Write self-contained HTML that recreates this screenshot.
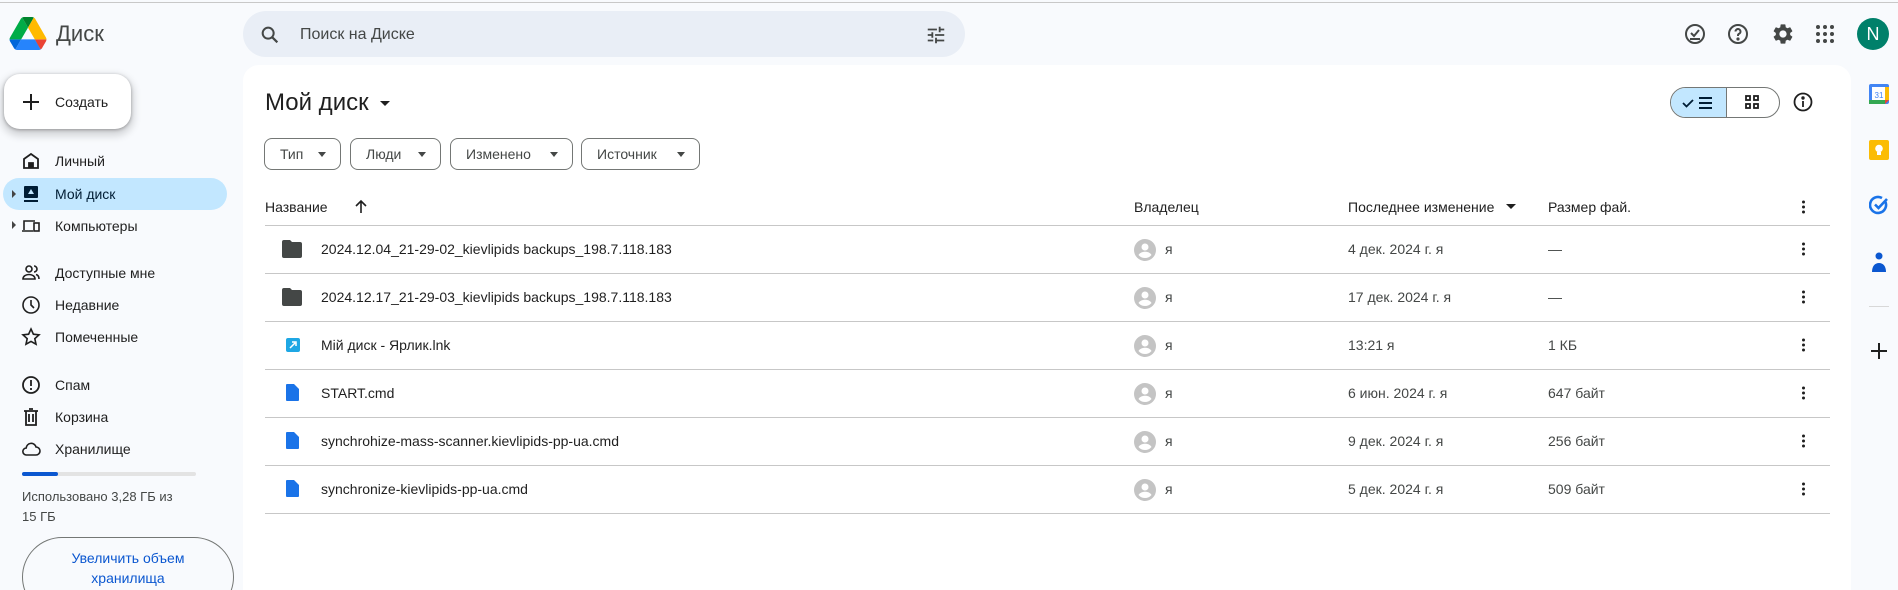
<!DOCTYPE html>
<html><head><meta charset="utf-8"><style>
*{box-sizing:border-box;margin:0;padding:0}
html{width:1898px;height:590px;overflow:hidden}
body{width:1898px;height:590px;overflow:hidden;background:#f8fafd;font-family:"Liberation Sans",Arial,sans-serif;color:#1f1f1f;position:relative}
.a{position:absolute}
.t{font-size:14px;white-space:nowrap}
.nav{position:absolute;left:55px;font-size:14px;color:#1f1f1f;transform:translateY(-50%)}
.ni{position:absolute;left:21px;width:20px;height:20px;transform:translateY(-50%)}
.chip{position:absolute;top:138px;height:32px;border:1px solid #747775;border-radius:8px;font-size:14px;color:#444746;padding-left:15px;line-height:30px}
.chip:after{content:"";position:absolute;right:14px;top:13px;border-left:4px solid transparent;border-right:4px solid transparent;border-top:5px solid #444746}
.line{position:absolute;left:265px;width:1565px;height:1px;background:#c7c7c7}
.cell{position:absolute;font-size:14px;transform:translateY(-50%);white-space:nowrap;color:#1f1f1f}
.keb{position:absolute;left:1802px;width:4px;transform:translateY(-50%)}
.keb i{display:block;width:3px;height:3px;border-radius:2px;background:#1f1f1f;margin:2px 0}
</style></head><body>
<div class="a" style="left:0;top:2px;width:1898px;height:1px;background:#c8c8c8"></div>
<svg class="a" style="left:9px;top:17px" width="38" height="33" viewBox="0 0 87.3 78">
<path d="m6.6 66.85 3.850 6.65c.8 1.4 1.95 2.5 3.3 3.3l13.75-23.8h-27.5c0 1.55.4 3.1 1.2 4.5z" fill="#0066da"/>
<path d="m43.65 25-13.75-23.8c-1.35.8-2.5 1.9-3.3 3.3l-25.4 44a9.06 9.06 0 0 0 -1.2 4.5h27.5z" fill="#00ac47"/>
<path d="m73.55 76.8c1.35-.8 2.5-1.9 3.3-3.3l1.6-2.75 7.65-13.25c.8-1.4 1.2-2.950 1.2-4.5h-27.502l5.852 11.5z" fill="#ea4335"/>
<path d="m43.65 25 13.75-23.8c-1.35-.8-2.9-1.2-4.5-1.2h-18.5c-1.6 0-3.15.45-4.5 1.2z" fill="#00832d"/>
<path d="m59.8 53h-32.3l-13.75 23.8c1.35.8 2.9 1.2 4.5 1.2h50.8c1.6 0 3.15-.45 4.5-1.2z" fill="#2684fc"/>
<path d="m73.4 26.5-12.7-22c-.8-1.4-1.95-2.5-3.3-3.3l-13.75 23.8 16.15 28h27.45c0-1.55-.4-3.1-1.2-4.5z" fill="#ffba00"/>
</svg>
<div class="a" style="left:56px;top:21px;font-size:22px;color:#444746">Диск</div>
<div class="a" style="left:243px;top:11px;width:722px;height:46px;border-radius:23px;background:#e9eef6"></div>
<svg class="a" style="left:259px;top:24px" width="22" height="22" viewBox="0 0 24 24"><circle cx="10" cy="10" r="6" fill="none" stroke="#444746" stroke-width="2.2"/><path d="M14.5 14.5 20 20" stroke="#444746" stroke-width="2.4"/></svg>
<div class="a" style="left:300px;top:26px;font-size:16px;color:#444746">Поиск на Диске</div>
<svg class="a" style="left:925px;top:24px" width="22" height="22" viewBox="0 0 24 24" fill="#444746"><path d="M3 17v2h6v-2H3zM3 5v2h10V5H3zm10 16v-2h8v-2h-8v-2h-2v6h2zM7 9v2H3v2h4v2h2V9H7zm14 4v-2H11v2h10zm-6-4h2V7h4V5h-4V3h-2v6z"/></svg>
<svg class="a" style="left:1683px;top:22px" width="24" height="24" viewBox="0 0 24 24" fill="none" stroke="#444746" stroke-width="2"><circle cx="12" cy="12" r="9"/><path d="M8 11l3 3 5-6M7 17h10"/></svg>
<svg class="a" style="left:1726px;top:22px" width="24" height="24" viewBox="0 0 24 24" fill="none" stroke="#444746" stroke-width="2"><circle cx="12" cy="12" r="9"/><path d="M9.5 9.5a2.5 2.5 0 1 1 3.5 2.3c-.7.4-1 1-1 1.7v.5"/><circle cx="12" cy="17" r=".6" fill="#444746"/></svg>
<svg class="a" style="left:1771px;top:22px" width="24" height="24" viewBox="0 0 24 24" fill="#444746"><path d="M19.14 12.94c.04-.3.06-.61.06-.94s-.02-.64-.07-.94l2.03-1.58a.49.49 0 0 0 .12-.61l-1.92-3.32a.49.49 0 0 0-.59-.22l-2.39.96c-.5-.38-1.03-.7-1.62-.94l-.36-2.54a.48.48 0 0 0-.48-.41h-3.840c-.24 0-.43.17-.47.41l-.36 2.54c-.59.24-1.13.57-1.62.94l-2.39-.96a.48.48 0 0 0-.59.22L2.74 8.87c-.12.21-.08.47.12.61l2.03 1.58c-.05.3-.09.63-.09.94s.02.64.07.94l-2.03 1.58a.49.49 0 0 0-.12.61l1.92 3.32c.12.22.37.29.59.22l2.39-.96c.5.38 1.03.7 1.62.94l.36 2.54c.05.24.24.41.48.41h3.84c.24 0 .44-.17.47-.41l.36-2.54c.59-.24 1.13-.56 1.62-.94l2.39.96c.22.08.47 0 .59-.22l1.92-3.32c.12-.22.07-.47-.12-.61l-2.01-1.58zM12 15.6c-1.98 0-3.6-1.62-3.6-3.6s1.62-3.6 3.6-3.6 3.6 1.62 3.6 3.6-1.62 3.6-3.6 3.6z"/></svg>
<svg class="a" style="left:1815px;top:24px" width="20" height="20" viewBox="0 0 20 20" fill="#444746"><circle cx="3" cy="3" r="2"/><circle cx="10" cy="3" r="2"/><circle cx="17" cy="3" r="2"/><circle cx="3" cy="10" r="2"/><circle cx="10" cy="10" r="2"/><circle cx="17" cy="10" r="2"/><circle cx="3" cy="17" r="2"/><circle cx="10" cy="17" r="2"/><circle cx="17" cy="17" r="2"/></svg>
<div class="a" style="left:1857px;top:18px;width:32px;height:32px;border-radius:16px;background:#00806a;color:#fff;font-size:18px;text-align:center;line-height:32px">N</div>
<div class="a" style="left:4px;top:74px;width:127px;height:55px;border-radius:16px;background:#fff;box-shadow:0 1px 3px rgba(0,0,0,.3),0 4px 8px 3px rgba(0,0,0,.15)"></div>
<svg class="a" style="left:21px;top:92px" width="20" height="20" viewBox="0 0 20 20"><path d="M10 2v16M2 10h16" stroke="#1f1f1f" stroke-width="2"/></svg>
<div class="a t" style="left:55px;top:94px;font-weight:500">Создать</div>
<div class="a" style="left:3px;top:178px;width:224px;height:32px;border-radius:16px;background:#c2e7ff"></div>
<div class="a" style="left:12px;top:190px;border-top:4px solid transparent;border-bottom:4px solid transparent;border-left:4px solid #444"></div>
<div class="a" style="left:12px;top:221px;border-top:4px solid transparent;border-bottom:4px solid transparent;border-left:4px solid #444"></div>
<svg class="ni" style="top:161px" viewBox="0 0 20 20" fill="none" stroke="#1f1f1f" stroke-width="1.8"><path d="M3 17V8l7-5 7 5v9H3z"/><path d="M8 17v-5h4v5" fill="#1f1f1f"/></svg>
<svg class="ni" style="top:194px" viewBox="0 0 20 20"><rect x="3" y="2" width="14" height="12" rx="1" fill="#001d35"/><rect x="3" y="16" width="14" height="2" fill="#001d35"/><path d="M10 5l3 5H7z" fill="#c2e7ff"/></svg>
<svg class="ni" style="top:226px" viewBox="0 0 20 20" fill="none" stroke="#1f1f1f" stroke-width="1.6"><path d="M3 14V5h11M1 15h11"/><rect x="13" y="7" width="5" height="8"/></svg>
<svg class="ni" style="top:273px" viewBox="0 0 20 20" fill="none" stroke="#1f1f1f" stroke-width="1.6"><circle cx="8" cy="6" r="3"/><path d="M2 16c0-3 3-4.5 6-4.5s6 1.5 6 4.5zM13 3a3 3 0 0 1 0 6M15 11.5c2 .5 3 2 3 4.5"/></svg>
<svg class="ni" style="top:305px" viewBox="0 0 20 20" fill="none" stroke="#1f1f1f" stroke-width="1.6"><circle cx="10" cy="10" r="8"/><path d="M10 5v5l3 3"/></svg>
<svg class="ni" style="top:337px" viewBox="0 0 20 20" fill="none" stroke="#1f1f1f" stroke-width="1.6"><path d="M10 2l2.4 5.2 5.6.6-4.2 3.8 1.2 5.6L10 14.4 5 17.2l1.2-5.6L2 7.8l5.6-.6z"/></svg>
<svg class="ni" style="top:385px" viewBox="0 0 20 20" fill="none" stroke="#1f1f1f" stroke-width="1.8"><circle cx="10" cy="10" r="8"/><path d="M10 5v6M10 13v2"/></svg>
<svg class="ni" style="top:417px" viewBox="0 0 20 20" fill="none" stroke="#1f1f1f" stroke-width="1.8"><path d="M3 4h14M8 2h4M5 4v14h10V4M8 7v8M12 7v8"/></svg>
<svg class="ni" style="top:449px" viewBox="0 0 20 20" fill="none" stroke="#1f1f1f" stroke-width="1.6"><path d="M5.5 16a3.5 3.5 0 0 1-.3-7A5 5 0 0 1 15 8a4 4 0 0 1 0 8z"/></svg>
<div class="nav" style="top:161px">Личный</div>
<div class="nav" style="top:194px;color:#001d35">Мой диск</div>
<div class="nav" style="top:226px">Компьютеры</div>
<div class="nav" style="top:273px">Доступные мне</div>
<div class="nav" style="top:305px">Недавние</div>
<div class="nav" style="top:337px">Помеченные</div>
<div class="nav" style="top:385px">Спам</div>
<div class="nav" style="top:417px">Корзина</div>
<div class="nav" style="top:449px">Хранилище</div>
<div class="a" style="left:22px;top:472px;width:174px;height:4px;border-radius:2px;background:#e3e3e3"></div>
<div class="a" style="left:22px;top:472px;width:36px;height:4px;border-radius:2px;background:#0b57d0"></div>
<div class="a" style="left:22px;top:487px;font-size:13px;color:#444746;line-height:20px">Использовано 3,28 ГБ из<br>15 ГБ</div>
<div class="a" style="left:22px;top:537px;width:212px;height:53px;overflow:hidden"><div style="width:212px;height:80px;border:1px solid #747775;border-radius:40px;text-align:center;font-size:14px;color:#0b57d0;line-height:20px;padding-top:10px">Увеличить объем<br>хранилища</div></div>
<div class="a" style="left:243px;top:65px;width:1608px;height:525px;background:#fff;border-radius:16px 16px 0 0"></div>
<div class="a" style="left:265px;top:89px;font-size:24px;color:#1f1f1f">Мой диск</div>
<div class="a" style="left:380px;top:101px;border-left:5px solid transparent;border-right:5px solid transparent;border-top:5px solid #1f1f1f"></div>
<div class="chip" style="left:264px;width:77px">Тип</div>
<div class="chip" style="left:350px;width:91px">Люди</div>
<div class="chip" style="left:450px;width:123px">Изменено</div>
<div class="chip" style="left:581px;width:119px">Источник</div>
<div class="a" style="left:1670px;top:87px;width:110px;height:31px;border:1px solid #747775;border-radius:16px;overflow:hidden"><div style="width:56px;height:100%;background:#c2e7ff;border-right:1px solid #747775"></div></div>
<svg class="a" style="left:1682px;top:94px" width="36" height="18" viewBox="0 0 36 18" fill="none" stroke="#001d35" stroke-width="1.8"><path d="M1 9l3.5 3.5L11 6"/><path d="M17 4h13M17 9h13M17 14h13" stroke-width="2"/></svg>
<svg class="a" style="left:1745px;top:95px" width="14" height="14" viewBox="0 0 14 14" fill="none" stroke="#1f1f1f" stroke-width="1.8"><rect x="1" y="1" width="4" height="4"/><rect x="9" y="1" width="4" height="4"/><rect x="1" y="9" width="4" height="4"/><rect x="9" y="9" width="4" height="4"/></svg>
<svg class="a" style="left:1792px;top:91px" width="22" height="22" viewBox="0 0 22 22" fill="none" stroke="#1f1f1f" stroke-width="1.8"><circle cx="11" cy="11" r="8.5"/><path d="M11 10v6"/><circle cx="11" cy="7" r=".8" fill="#1f1f1f"/></svg>
<div class="cell" style="left:265px;top:207px;font-weight:500">Название</div>
<svg class="a" style="left:353px;top:199px" width="16" height="16" viewBox="0 0 16 16" fill="none" stroke="#1f1f1f" stroke-width="1.6"><path d="M8 14V2M3 7l5-5 5 5"/></svg>
<div class="cell" style="left:1134px;top:207px;font-weight:500">Владелец</div>
<div class="cell" style="left:1348px;top:207px;font-weight:500">Последнее изменение</div>
<div class="a" style="left:1506px;top:204px;border-left:5px solid transparent;border-right:5px solid transparent;border-top:5px solid #1f1f1f"></div>
<div class="cell" style="left:1548px;top:207px;font-weight:500">Размер фай.</div>
<div class="keb" style="top:207px"><i></i><i></i><i></i></div>
<div class="line" style="top:225px"></div>
<div class="line" style="top:273px"></div>
<div class="line" style="top:321px"></div>
<div class="line" style="top:369px"></div>
<div class="line" style="top:417px"></div>
<div class="line" style="top:465px"></div>
<div class="line" style="top:513px"></div>
<svg class="a" style="left:282px;top:240px" width="20" height="18" viewBox="0 0 20 18"><path d="M0 2a2 2 0 0 1 2-2h6l2 2h8a2 2 0 0 1 2 2v12a2 2 0 0 1-2 2H2a2 2 0 0 1-2-2z" fill="#444746"/></svg>
<svg class="a" style="left:282px;top:288px" width="20" height="18" viewBox="0 0 20 18"><path d="M0 2a2 2 0 0 1 2-2h6l2 2h8a2 2 0 0 1 2 2v12a2 2 0 0 1-2 2H2a2 2 0 0 1-2-2z" fill="#444746"/></svg>
<svg class="a" style="left:286px;top:338px" width="14" height="14" viewBox="0 0 14 14"><rect width="14" height="14" rx="2" fill="#1ea7e4"/><path d="M4 10l5-5M6 4h4v4" stroke="#fff" stroke-width="1.5" fill="none"/></svg>
<svg class="a" style="left:286px;top:384px" width="13" height="17" viewBox="0 0 13 17"><path d="M0 1a1 1 0 0 1 1-1h7l5 5v11a1 1 0 0 1-1 1H1a1 1 0 0 1-1-1z" fill="#1a73e8"/></svg>
<svg class="a" style="left:286px;top:432px" width="13" height="17" viewBox="0 0 13 17"><path d="M0 1a1 1 0 0 1 1-1h7l5 5v11a1 1 0 0 1-1 1H1a1 1 0 0 1-1-1z" fill="#1a73e8"/></svg>
<svg class="a" style="left:286px;top:480px" width="13" height="17" viewBox="0 0 13 17"><path d="M0 1a1 1 0 0 1 1-1h7l5 5v11a1 1 0 0 1-1 1H1a1 1 0 0 1-1-1z" fill="#1a73e8"/></svg>
<div class="cell" style="left:321px;top:249px">2024.12.04_21-29-02_kievlipids backups_198.7.118.183</div>
<div class="cell" style="left:321px;top:297px">2024.12.17_21-29-03_kievlipids backups_198.7.118.183</div>
<div class="cell" style="left:321px;top:345px">Мій диск - Ярлик.lnk</div>
<div class="cell" style="left:321px;top:393px">START.cmd</div>
<div class="cell" style="left:321px;top:441px">synchrohize-mass-scanner.kievlipids-pp-ua.cmd</div>
<div class="cell" style="left:321px;top:489px">synchronize-kievlipids-pp-ua.cmd</div>
<svg class="a" style="left:1134px;top:239px" width="22" height="22" viewBox="0 0 22 22"><circle cx="11" cy="11" r="11" fill="#c4c4c4"/><circle cx="11" cy="8" r="3.5" fill="#fff"/><path d="M4.5 16c1.5-2.5 4-3.2 6.5-3.2s5 .7 6.5 3.2a8.5 8.5 0 0 1-13 0z" fill="#fff"/></svg>
<svg class="a" style="left:1134px;top:287px" width="22" height="22" viewBox="0 0 22 22"><circle cx="11" cy="11" r="11" fill="#c4c4c4"/><circle cx="11" cy="8" r="3.5" fill="#fff"/><path d="M4.5 16c1.5-2.5 4-3.2 6.5-3.2s5 .7 6.5 3.2a8.5 8.5 0 0 1-13 0z" fill="#fff"/></svg>
<svg class="a" style="left:1134px;top:335px" width="22" height="22" viewBox="0 0 22 22"><circle cx="11" cy="11" r="11" fill="#c4c4c4"/><circle cx="11" cy="8" r="3.5" fill="#fff"/><path d="M4.5 16c1.5-2.5 4-3.2 6.5-3.2s5 .7 6.5 3.2a8.5 8.5 0 0 1-13 0z" fill="#fff"/></svg>
<svg class="a" style="left:1134px;top:383px" width="22" height="22" viewBox="0 0 22 22"><circle cx="11" cy="11" r="11" fill="#c4c4c4"/><circle cx="11" cy="8" r="3.5" fill="#fff"/><path d="M4.5 16c1.5-2.5 4-3.2 6.5-3.2s5 .7 6.5 3.2a8.5 8.5 0 0 1-13 0z" fill="#fff"/></svg>
<svg class="a" style="left:1134px;top:431px" width="22" height="22" viewBox="0 0 22 22"><circle cx="11" cy="11" r="11" fill="#c4c4c4"/><circle cx="11" cy="8" r="3.5" fill="#fff"/><path d="M4.5 16c1.5-2.5 4-3.2 6.5-3.2s5 .7 6.5 3.2a8.5 8.5 0 0 1-13 0z" fill="#fff"/></svg>
<svg class="a" style="left:1134px;top:479px" width="22" height="22" viewBox="0 0 22 22"><circle cx="11" cy="11" r="11" fill="#c4c4c4"/><circle cx="11" cy="8" r="3.5" fill="#fff"/><path d="M4.5 16c1.5-2.5 4-3.2 6.5-3.2s5 .7 6.5 3.2a8.5 8.5 0 0 1-13 0z" fill="#fff"/></svg>
<div class="cell" style="left:1165px;top:249px;color:#444746">я</div>
<div class="cell" style="left:1165px;top:297px;color:#444746">я</div>
<div class="cell" style="left:1165px;top:345px;color:#444746">я</div>
<div class="cell" style="left:1165px;top:393px;color:#444746">я</div>
<div class="cell" style="left:1165px;top:441px;color:#444746">я</div>
<div class="cell" style="left:1165px;top:489px;color:#444746">я</div>
<div class="cell" style="left:1348px;top:249px;color:#444746">4 дек. 2024 г. я</div>
<div class="cell" style="left:1348px;top:297px;color:#444746">17 дек. 2024 г. я</div>
<div class="cell" style="left:1348px;top:345px;color:#444746">13:21 я</div>
<div class="cell" style="left:1348px;top:393px;color:#444746">6 июн. 2024 г. я</div>
<div class="cell" style="left:1348px;top:441px;color:#444746">9 дек. 2024 г. я</div>
<div class="cell" style="left:1348px;top:489px;color:#444746">5 дек. 2024 г. я</div>
<div class="cell" style="left:1548px;top:249px;color:#444746">—</div>
<div class="cell" style="left:1548px;top:297px;color:#444746">—</div>
<div class="cell" style="left:1548px;top:345px;color:#444746">1 КБ</div>
<div class="cell" style="left:1548px;top:393px;color:#444746">647 байт</div>
<div class="cell" style="left:1548px;top:441px;color:#444746">256 байт</div>
<div class="cell" style="left:1548px;top:489px;color:#444746">509 байт</div>
<div class="keb" style="top:249px"><i></i><i></i><i></i></div>
<div class="keb" style="top:297px"><i></i><i></i><i></i></div>
<div class="keb" style="top:345px"><i></i><i></i><i></i></div>
<div class="keb" style="top:393px"><i></i><i></i><i></i></div>
<div class="keb" style="top:441px"><i></i><i></i><i></i></div>
<div class="keb" style="top:489px"><i></i><i></i><i></i></div>
<svg class="a" style="left:1869px;top:84px" width="20" height="20" viewBox="0 0 20 20"><rect width="20" height="20" rx="2" fill="#4285f4"/><rect x="3" y="3" width="14" height="13" fill="#fff"/><rect x="0" y="16" width="16" height="4" fill="#34a853"/><rect x="16" y="3" width="4" height="13" fill="#fbbc04"/><path d="M16 16h4l-4 4z" fill="#ea4335"/><text x="10" y="14" font-size="8" text-anchor="middle" fill="#4285f4" font-family="Liberation Sans">31</text></svg>
<svg class="a" style="left:1869px;top:140px" width="20" height="20" viewBox="0 0 20 20"><rect width="20" height="20" rx="2" fill="#fbbc04"/><circle cx="10" cy="8.5" r="3.8" fill="#fff"/><rect x="8" y="12" width="4" height="3" fill="#fff"/></svg>
<svg class="a" style="left:1869px;top:195px" width="20" height="20" viewBox="0 0 20 20" fill="none" stroke="#1a73e8" stroke-width="2.6"><path d="M16 6a8 8 0 1 1-3-3"/><path d="M6 9.5l3.5 3.5L18 4"/></svg>
<svg class="a" style="left:1870px;top:252px" width="18" height="20" viewBox="0 0 18 20" fill="#0b57d0"><circle cx="9" cy="4" r="3.5"/><path d="M2 20c0-6 3-9 7-9s7 3 7 9z"/></svg>
<div class="a" style="left:1869px;top:306px;width:20px;height:1px;background:#d8d8d8"></div>
<svg class="a" style="left:1870px;top:342px" width="18" height="18" viewBox="0 0 18 18"><path d="M9 1v16M1 9h16" stroke="#1f1f1f" stroke-width="2"/></svg>
</body></html>
